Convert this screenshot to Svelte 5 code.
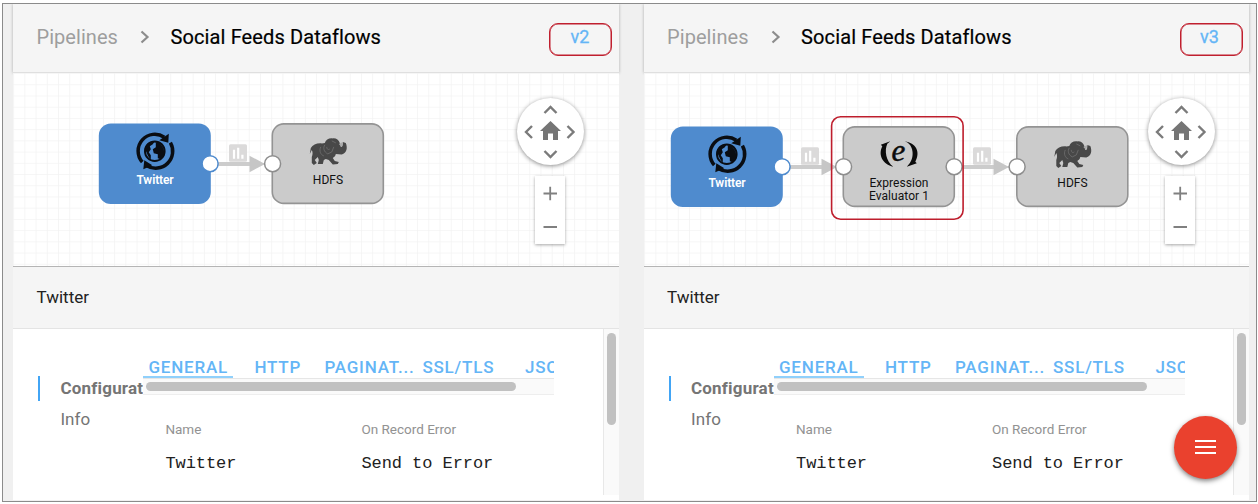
<script>
  const tabs = [
    { label: 'GENERAL', width: 90, gap: 16, active: true },
    { label: 'HTTP', width: 70 },
    { label: 'PAGINAT...', width: 98 },
    { label: 'SSL/TLS', width: 102.5 },
    { label: 'JSON', width: 60 }
  ];
  const panels = [
    {
      version: 'v2',
      badgeGap: 7,
      badgePad: 1,
      nodes: [
        { kind: 'twitter', x: 86, y: 51, lines: ['Twitter'] },
        { kind: 'hdfs', x: 259, y: 51, lines: ['HDFS'] }
      ]
    },
    {
      version: 'v3',
      badgeGap: 6,
      badgePad: 5,
      nodes: [
        { kind: 'twitter', x: 27, y: 54, lines: ['Twitter'] },
        { kind: 'expression', x: 199, y: 54, lines: ['Expression', 'Evaluator 1'], marked: true },
        { kind: 'hdfs', x: 372.5, y: 54, lines: ['HDFS'] }
      ]
    }
  ];
</script>

<div class="frame">
  {#each panels as panel, p}
    <section class="panel">
      <header class="crumbs">
        <span class="root">Pipelines</span>
        <svg class="sep" width="10" height="14" viewBox="0 0 10 14"><path d="M1.5 1.5 7.5 7 1.5 12.5" fill="none" stroke="#8c8c8c" stroke-width="2.2" /></svg>
        <span class="title">Social Feeds Dataflows</span>
        <span class="version" style:margin-right="{panel.badgeGap}px" style:padding-right="{panel.badgePad}px">{panel.version}</span>
      </header>

      <div class="canvas">
        <svg width="606" height="194" viewBox="0 0 606 194">
          <defs>
            <pattern id="grid{p}" width="11.22" height="11.22" x="1.1" y="1" patternUnits="userSpaceOnUse">
              <path d="M11 0V11.22M0 11H11.22" stroke="#f3f3f3" stroke-width="1" fill="none" />
            </pattern>
          </defs>
          <rect width="606" height="194" fill="url(#grid{p})" />

          {#each panel.nodes.slice(0, -1) as n}
            <g transform="translate({n.x + 111.5},{n.y + 39.7})">
              <path d="M6 .3H42" stroke="#cccccc" stroke-width="4.2" />
              <path d="M39 -8 54.5 .3 39 8.5Z" fill="#c6c6c6" />
              <path d="M52 .3H60" stroke="#c6c6c6" stroke-width="1.5" />
              <rect x="18.500" y="-19.500" width="18" height="17.500" rx="1.5" fill="#dbdada" />
              <path d="M23.500 -14V-5M27.700 -16V-5M31.900 -9V-5" stroke="#fff" stroke-width="2.2" />
            </g>
          {/each}

          {#each panel.nodes as n, i}
            <g transform="translate({n.x - 0.2},{n.y - 0.3})">
              {#if n.kind === 'twitter'}
                <rect x="0" y="-.2" width="112" height="80.5" rx="12" fill="#4f8bce" />
              {:else}
                <rect x=".5" y=".2" width="111" height="79.5" rx="11.5" fill="#cbcbcb" stroke="#949494" stroke-width="1.6" />
              {/if}

              {#if n.kind === 'twitter'}
                <g transform="translate(56,27.5)">
                  <g fill="none" stroke="#0a0d12" stroke-width="3.5">
                    <path d="M-12.500 10.800A16.700 16.700 0 0 1 9.500 -14" />
                    <path d="M15.600 -8.500A17 17 0 0 1 -8 14.500" />
                  </g>
                  <path d="M14 -17.500 13.500 -8.500 4.500 -11ZM-11.500 18 -10.500 9 -2.500 14Z" fill="#0a0d12" />
                  <circle r="9.800" fill="#4f8bce" stroke="#0a0d12" stroke-width="2" />
                  <path d="M-10 -3C-8 -9 -4 -10 0 -10L-2 -7-5 -5-4 -2-6 1-4 4-4 8C-8 5-7 1-10 -1ZM1 -9 5 -8C9 -4 10 0 9 4L6 8 3 7 3 3 -1 2-2 -2 1 -4Z" fill="#0a0d12" />
                </g>
              {:else if n.kind === 'hdfs'}
                <g transform="translate(39,14.200)">
                  <path d="M0 10C2 7 6 5 11 5.500L14 5C15 2 18 0 22 .5 25 0 28 2 29 5L30 9C32 9 32 7 32 4L35 5C37 10 36 15 31 16.500L25 16C25 18 23 19 22 20L24 23 28 24 27 26 22 26.500 18 22 15 21 13 22 12 26 7 26 8 22 7 19 4 22 6 25 3 27 1 25 1 19C2 16 2 14 1 12L-1 16Z" fill="#484848" />
                  <path d="M14 7C12 10 13 14 17 16L21 14 23 9M10 9C8 13 10 17 13 18M21 3 25 5M16 9C16 12 18 12 19 11" fill="none" stroke="#707070" stroke-width=".8" />
                  <path d="M28 6 32 4 31 9Z" fill="#aaa" />
                </g>
              {:else}
                <g transform="translate(56,27.5)" fill="#0b0b0b">
                  <path d="M-8.500 -13-18 -9.500-16.500 -8C-21 1-16 10-5.500 12.500-13 7-14.500 -4-11.500 -10.500ZM6 -13C15 -10 16 3 10.500 9.500L8 12.500 18 9 16.500 7.500C22 -3 17 -11 6 -13Z" />
                  <text x="-.5" y="6.800" text-anchor="middle" class="e">e</text>
                </g>
              {/if}

              {#each n.lines as line, l}
                <text class="label" class:light={n.kind === 'twitter'} x="56.2" y={60.8 + l * 12.2} text-anchor="middle">{line}</text>
              {/each}

              {#if i > 0}
                <circle cx=".8" cy="40" r="8" fill="#fff" stroke="#8e8e8e" stroke-width="1.5" />
              {/if}
              {#if i < panel.nodes.length - 1}
                <circle cx="111.3" cy="40" r="8" fill="#fff" stroke={n.kind === 'twitter' ? '#4f8bce' : '#8e8e8e'} stroke-width="1.5" />
              {/if}
              {#if n.marked}
                <rect x="-11.2" y="-10" width="131.5" height="102.5" rx="9" fill="none" stroke="#be1e2d" stroke-width="1.6" />
              {/if}
            </g>
          {/each}
        </svg>

        <div class="controls">
          <div class="compass">
            <svg width="67" height="67" viewBox="-33.5 -33.5 67 67">
              <g fill="none" stroke="#7b7b7b" stroke-width="2.4">
                <path d="M-6 -18.500 0 -24.500 6 -18.500M-6 19.500 0 25.500 6 19.500M-18.500 -5.500-24.500 .5-18.500 6.500M17 -5.500 23 .5 17 6.500" />
              </g>
              <path d="M0-10.500 10.500-.5H7.500V8.500H2.500V2H-2.500V8.500H-7.500V-.5H-10.500Z" fill="#757575" />
            </svg>
          </div>
          <div class="zoomer">
            <svg width="30" height="68" viewBox="0 0 30 68"><path d="M8.500 17.500H22M15.200 10.800V24.200M8.500 51H22" stroke="#808080" stroke-width="1.8" /></svg>
          </div>
        </div>
      </div>

      <h2 class="stage">Twitter</h2>

      <div class="details">
        <nav class="side">
          <span class="item selected">Configurat</span>
          <span class="item">Info</span>
        </nav>
        <div class="config">
          <div class="tabs">
            {#each tabs as tab}
              <span class="tab" class:active={tab.active} style:width="{tab.width}px" style:margin-right="{tab.gap ?? 0}px">{tab.label}</span>
            {/each}
          </div>
          <div class="hscroll"><i></i></div>
          <div class="fields">
            <div class="field"><label for="name{p}">Name</label><output id="name{p}">Twitter</output></div>
            <div class="field"><label for="err{p}">On Record Error</label><output id="err{p}">Send to Error</output></div>
          </div>
        </div>
        <div class="vscroll"><i></i></div>
      </div>
    </section>
  {/each}

  <button class="fab" aria-label="Menu">
    <svg width="22" height="16" viewBox="0 0 22 16"><path d="M0 1H21M0 7H21M0 13H21" stroke="#fff" stroke-width="2" /></svg>
  </button>
</div>

<style>
  :global(body) { background: #fff; font-family: Roboto, sans-serif; }
  :global(#app) { display: flow-root; }
  .frame {
    box-sizing: border-box;
    position: relative;
    width: 1255px;
    height: 499px;
    margin: 3px 0 0 2px;
    padding: 0 6px 0 10.4px;
    border: 1px solid #8b8b8b;
    background: #f0f0f0;
    display: flex;
    gap: 25.1px;
    overflow: hidden;
  }
  .panel { width: 605.5px; flex: none; display: flex; flex-direction: column; }
  .crumbs {
    box-sizing: border-box;
    height: 69px;
    flex: none;
    padding: 0 0 2px 23.1px;
    display: flex;
    align-items: center;
    background: #f5f5f5;
    border-bottom: 1px solid #dfdfdf;
    box-shadow: 0 0 3px rgba(0, 0, 0, .28);
    font-size: 20px;
  }
  .root { width: 104px; color: #9e9e9e; letter-spacing: .05px; }
  .sep { width: 10px; margin-right: 20px; }
  .title { flex: 1; color: #000; letter-spacing: .12px; -webkit-text-stroke: .2px #000; }
  .version {
    box-sizing: border-box;
    width: 63px;
    height: 33px;
    margin-top: 4px;
    padding-bottom: 6px;
    border: 1px solid #c01f2e;
    box-shadow: inset 0 0 0 .5px #c01f2e;
    border-radius: 9px;
    display: grid;
    place-items: center;
    color: #64b5f6;
    font-size: 18px;
    -webkit-text-stroke: .3px #64b5f6;
  }
  .canvas { position: relative; height: 193px; flex: none; background: #fff; border-bottom: 1px solid #b5b5b5; overflow: hidden; }
  .canvas svg { display: block; }
  .label { font-size: 12px; fill: #111; letter-spacing: .05px; }
  .light { fill: #fff; font-weight: 600; letter-spacing: -.1px; }
  .e { font: italic 31px "Liberation Serif", serif; stroke: #0b0b0b; stroke-width: .5px; }
  .controls { position: absolute; top: 24.5px; right: 34.5px; display: flex; flex-direction: column; align-items: center; gap: 11px; }
  .compass { width: 67px; height: 67px; border-radius: 50%; background: #fff; box-shadow: 0 1px 4px rgba(0, 0, 0, .45); }
  .zoomer { width: 30px; height: 68px; margin-right: 2px; background: #fff; box-shadow: 0 1px 3px rgba(0, 0, 0, .35); }
  .stage {
    box-sizing: border-box;
    height: 62px;
    flex: none;
    margin: 0;
    padding-left: 23.1px;
    border-bottom: 1px solid #e4e4e4;
    background: #f5f5f5;
    color: #222;
    font-size: 17px;
    font-weight: 400;
    line-height: 61px;
  }
  .details { height: 171px; display: flex; background: #fff; }
  .side { width: 130px; padding-top: 47px; display: flex; flex-direction: column; gap: 6px; }
  .item { height: 25px; margin-left: 25px; padding-left: 20px; border-left: 2px solid transparent; color: #757575; font-size: 17px; line-height: 25px; letter-spacing: .1px; overflow: hidden; }
  .selected { border-color: #42a5f5; font-weight: 700; letter-spacing: .2px; }
  .config { width: 411px; padding-top: 27px; overflow: hidden; }
  .tabs { height: 22px; display: flex; overflow: hidden; }
  .tab { box-sizing: border-box; flex: none; height: 22px; padding-left: 5px; color: #64b5f6; font-size: 17px; font-weight: 500; letter-spacing: .8px; line-height: 22px; }
  .active { border-bottom: 2px solid #90d0fb; }
  .hscroll { box-sizing: border-box; height: 17px; padding: 3px 0 0 3px; background: #fafafa; border-top: 1px solid #e6e6e6; border-bottom: 1px solid #eee; }
  .hscroll i { display: block; width: 370px; height: 9px; border-radius: 5px; background: #c1c1c1; }
  .fields { display: grid; grid-template-columns: 196px 1fr; padding: 25px 0 0 22px; }
  .field { display: flex; flex-direction: column; gap: 16px; white-space: nowrap; }
  .field label { color: #929292; font-size: 13.5px; line-height: 18px; }
  .field output { color: #212121; font: 17px/20px "Courier New", "Liberation Mono", monospace; letter-spacing: -.06px; }
  .vscroll { box-sizing: border-box; width: 16px; height: 166px; margin-left: auto; padding: 4px 0 0 3px; background: #fafafa; border-left: 1px solid #e8e8e8; }
  .vscroll i { display: block; width: 9px; height: 92px; border-radius: 5px; background: #c1c1c1; }
  .fab {
    position: absolute;
    right: 19px;
    bottom: 22px;
    width: 63px;
    height: 63px;
    padding: 0;
    border: 0;
    border-radius: 50%;
    background: #ea412e;
    box-shadow: 0 2px 5px rgba(0, 0, 0, .5);
    display: grid;
    place-items: center;
  }
</style>
